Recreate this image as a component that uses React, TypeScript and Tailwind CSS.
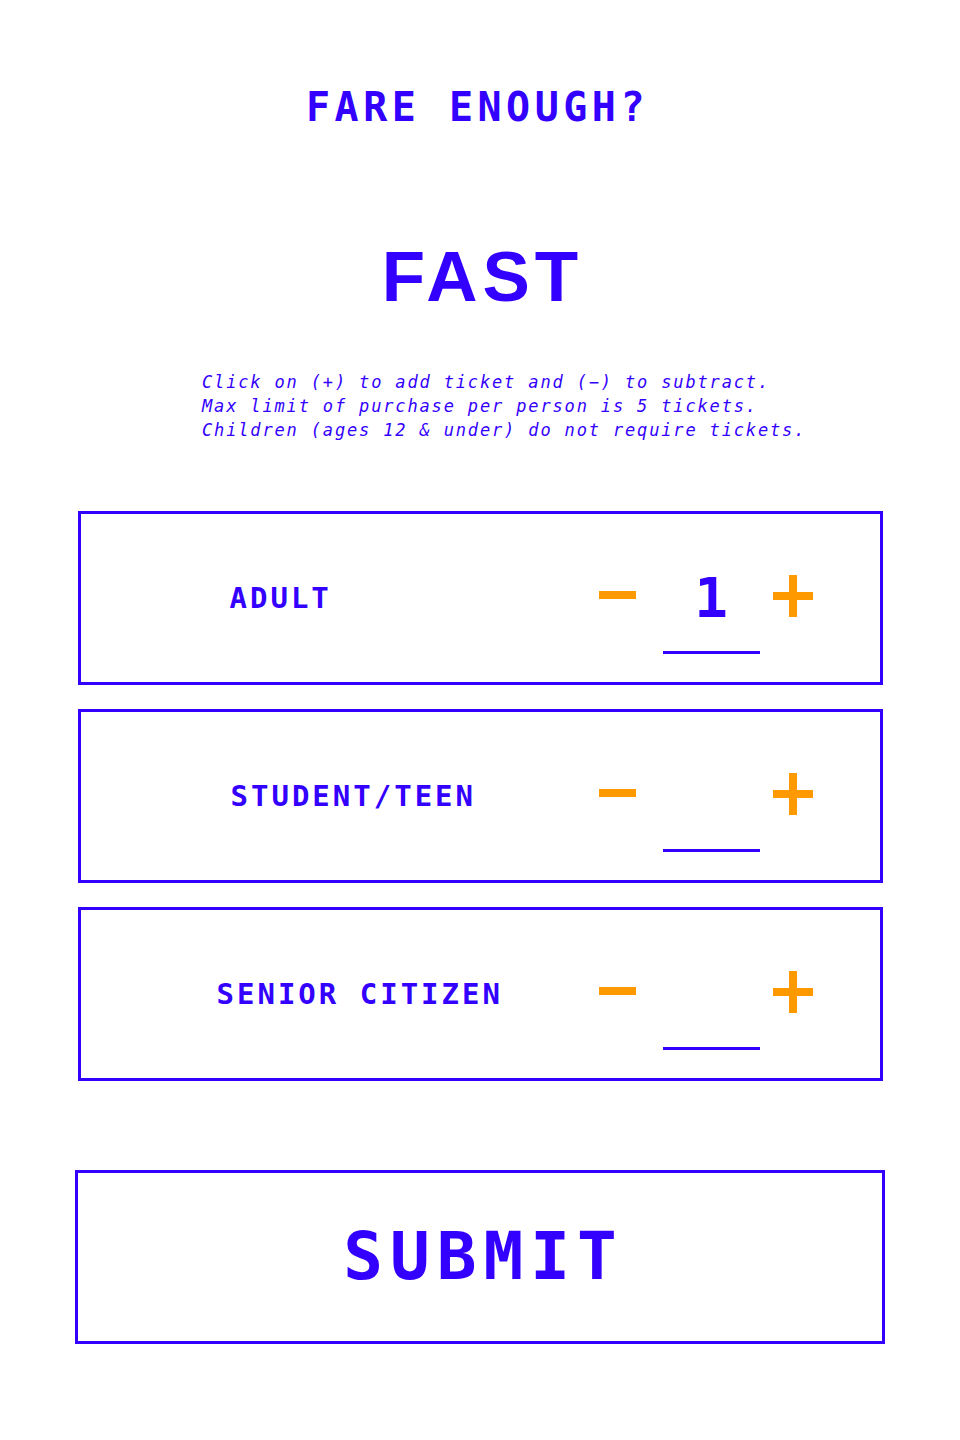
import React from "react";

const mono = "font-['DejaVu_Sans_Mono',monospace]";

function Minus() {
  return (
    <button type="button" aria-label="subtract" className="w-[37px] h-[42px] flex items-center justify-center -translate-y-[3px]">
      <span className="block w-[37px] h-[8px] bg-[#ff9900]" />
    </button>
  );
}

function Plus() {
  return (
    <button type="button" aria-label="add" className="w-[40px] h-[42px] flex items-center justify-center -translate-y-[2px]">
      <span className="relative block w-[40px] h-[42px]">
        <span className="absolute left-0 top-[17px] w-[40px] h-[8px] bg-[#ff9900]" />
        <span className="absolute left-[16px] top-0 w-[8px] h-[42px] bg-[#ff9900]" />
      </span>
    </button>
  );
}

function Row({ label, pl, value }: { label: string; pl: string; value?: string }) {
  return (
    <div className="w-[805px] h-[174px] border-[3px] border-[#3300ff] flex items-center">
      <div className={`${pl} ${mono} font-bold text-[29px] leading-[28px] tracking-[3px] text-[#3300ff]`}>{label}</div>
      <div className="ml-auto pr-[67px] flex items-center">
        <Minus />
        <div className="ml-[27px] w-[97px] flex flex-col items-center pt-[36px]">
          <div className={`h-[40px] flex items-center justify-center ${mono} font-bold text-[56px] leading-[40px] text-[#3300ff]`}>{value ?? ""}</div>
          <div className="mt-[33px] w-[97px] h-[3px] bg-[#3300ff]" />
        </div>
        <div className="ml-[13px]">
          <Plus />
        </div>
      </div>
    </div>
  );
}

export default function App() {
  return (
    <div className="w-[960px] min-h-[1440px] bg-white flex flex-col items-center">
      <h2 className={`mt-[87px] h-[40px] ${mono} font-bold text-[40px] leading-[40px] tracking-[4.5px] pr-[5px] text-[#3300ff]`}>
        FARE ENOUGH?
      </h2>
      <h1 className="mt-[114px] h-[72px] font-['Liberation_Sans',Arial,sans-serif] font-bold text-[71px] leading-[72px] tracking-[5px] pl-[5px] text-[#3300ff]">
        FAST
      </h1>
      <div className={`mt-[57px] self-start pl-[202px] ${mono} italic text-[17px] leading-[24px] tracking-[1.85px] text-[#3300ff]`}>
        <p>Click on (+) to add ticket and (−) to subtract.</p>
        <p>Max limit of purchase per person is 5 tickets.</p>
        <p>Children (ages 12 &amp; under) do not require tickets.</p>
      </div>
      <div className="mt-[69px] flex flex-col gap-[24px]">
        <Row label="ADULT" pl="pl-[149px]" value="1" />
        <Row label="STUDENT/TEEN" pl="pl-[150px]" />
        <Row label="SENIOR CITIZEN" pl="pl-[136px]" />
      </div>
      <button
        type="button"
        className={`mt-[89px] w-[810px] h-[174px] border-[3px] border-[#3300ff] flex items-center justify-center ${mono} font-bold text-[66px] leading-[66px] tracking-[7px] pl-[7px] text-[#3300ff]`}
      >
        SUBMIT
      </button>
    </div>
  );
}
